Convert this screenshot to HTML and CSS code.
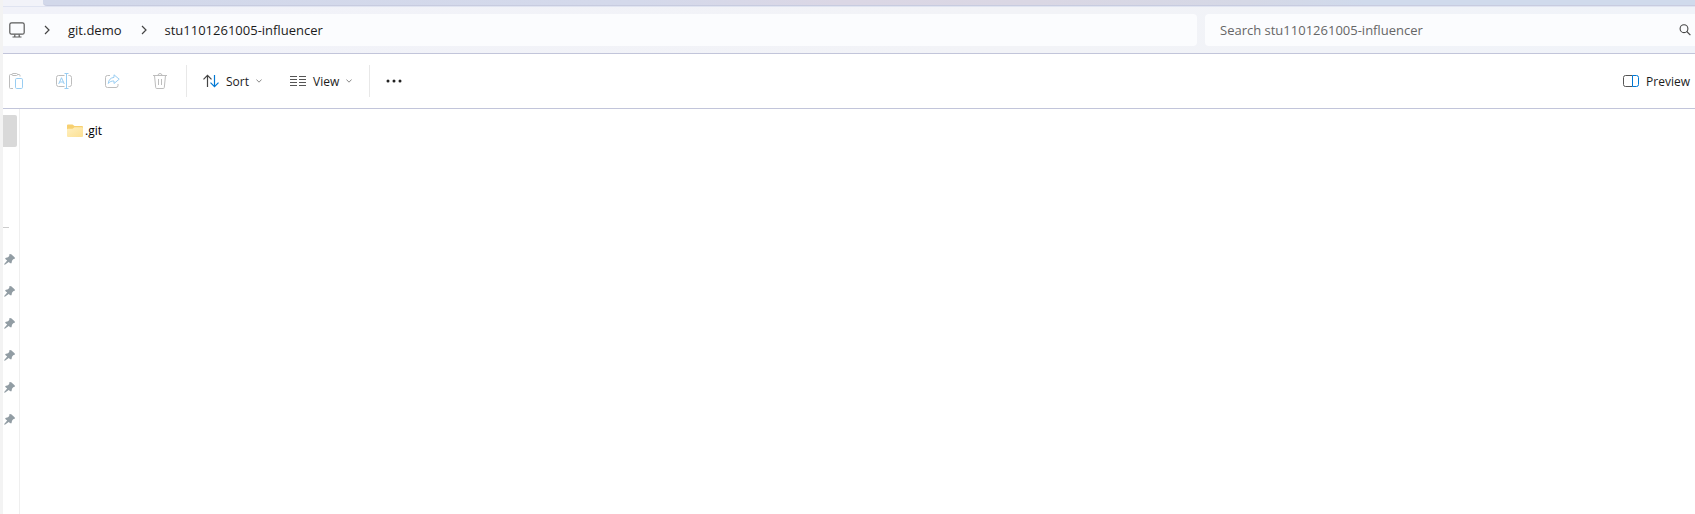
FILE: index.html
```
<!DOCTYPE html>
<html lang="en">
<head>
<meta charset="utf-8">
<title>stu1101261005-influencer</title>
<link rel="stylesheet" href="styles.css">
</head>
<body>
<div class="window">
  <div class="tabs"><div class="tabs-rest"></div></div>
  <header class="location">
    <nav class="address" aria-label="Address">
      <button class="crumb-icon" aria-label="This PC"><svg width="16" height="16" viewBox="0 0 16 16" fill="none" stroke="#5a5a5a" stroke-width="1.2"><rect x=".8" y=".8" width="14.4" height="11.4" rx="1.8"/><path d="M5.8 12.4v2.4M10.2 12.4v2.4M3.5 15h9"/></svg></button>
      <svg class="sep" width="6" height="10" viewBox="0 0 6 10" fill="none" stroke="#444" stroke-width="1.2"><path d="M1 1l4 4-4 4"/></svg>
      <a class="crumb" href="#">git.demo</a>
      <svg class="sep" width="6" height="10" viewBox="0 0 6 10" fill="none" stroke="#444" stroke-width="1.2"><path d="M1 1l4 4-4 4"/></svg>
      <a class="crumb" href="#">stu1101261005-influencer</a>
    </nav>
    <form class="search">
      <input class="search-input" type="text" aria-label="Search" placeholder="Search stu1101261005-influencer">
      <svg width="12" height="12" viewBox="0 0 12 12" fill="none" stroke="#444" stroke-width="1.1"><circle cx="5" cy="4.7" r="3.9"/><path d="M7.8 7.5l3.6 3.7"/></svg>
    </form>
  </header>
  <div class="toolbar">
    <div class="icon-group">
      <button class="tool" aria-label="Paste"><svg width="16" height="16" viewBox="0 0 16 16" fill="none" stroke="#bdbdbd"><path d="M5 15.5H2.500a1 1 0 0 1-1-1v-12a1 1 0 0 1 1-1H4M9.500 1.500H11a1 1 0 0 1 1 1V3.500"/><rect x="4" y=".5" width="5.500" height="2" rx="1"/><rect x="7.500" y="5.500" width="7" height="10" rx="1.200" stroke="#99cdf2"/></svg></button>
      <button class="tool" aria-label="Rename"><svg width="16" height="16" viewBox="0 0 16 16" fill="none" stroke="#bdbdbd"><path d="M8.500 13.500H2.500a2 2 0 0 1-2-2v-7a2 2 0 0 1 2-2h6M12.500 2.500h1a2 2 0 0 1 2 2v7a2 2 0 0 1-2 2h-1"/><g stroke="#99cdf2"><path d="M2.700 11L5.500 4.700 8.300 11M3.600 9h3.800M10.500 .5v15M8.500 .5h4M8.500 15.500h4"/></g></svg></button>
      <button class="tool" aria-label="Share"><svg width="16" height="16" viewBox="0 0 16 16" fill="none" stroke="#bdbdbd"><path d="M6 2.500H3.500a2 2 0 0 0-2 2v8a2 2 0 0 0 2 2h8.500a2 2 0 0 0 2-2V11"/><path d="M10 1.800l5.200 4.400-5.200 4.300V8C7.500 7.900 5.700 8.600 4.300 10.500 4.500 7 6.500 4.700 10 4.400z" stroke="#99cdf2" stroke-linejoin="round"/></svg></button>
      <button class="tool" aria-label="Delete"><svg width="16" height="16" viewBox="0 0 16 16" fill="none" stroke="#bdbdbd"><path d="M1 2.500h14M6 2.500a2 2 0 0 1 4 0M2.500 2.500l1.200 12a1 1 0 0 0 1 1h6.600a1 1 0 0 0 1-1l1.200-12M6.500 6v6M9.500 6v6"/></svg></button>
    </div>
    <div class="menu-group">
      <button class="menu"><svg width="16" height="14" viewBox="0 0 16 14" fill="none" stroke="#444" stroke-width="1.200"><path d="M4.500 13V1.300M.5 5.300l4-4 4 4"/><path d="M11.500 1v11.700M7.500 8.700l4 4 4-4" stroke="#0078d4"/></svg><span>Sort</span><svg width="6" height="4" viewBox="0 0 6 4" fill="none" stroke="#888"><path d="M.4.500L3 3.200 5.600.500"/></svg></button>
      <button class="menu"><svg width="16" height="10" viewBox="0 0 16 10" fill="none" stroke="#555"><path d="M0 .5h7M0 3.500h7M0 6.500h7M0 9.500h7M9 .5h7M9 3.500h7M9 6.500h7M9 9.500h7"/></svg><span>View</span><svg width="6" height="4" viewBox="0 0 6 4" fill="none" stroke="#888"><path d="M.4.500L3 3.200 5.600.500"/></svg></button>
    </div>
    <button class="more" aria-label="See more"><svg width="16" height="4" viewBox="0 0 16 4" fill="#222"><circle cx="2" cy="2" r="1.500"/><circle cx="8" cy="2" r="1.500"/><circle cx="14" cy="2" r="1.500"/></svg></button>
    <button class="menu preview"><svg width="16" height="12" viewBox="0 0 16 12" fill="none" stroke="#555"><path d="M9.500.5H2.500a2 2 0 0 0-2 2v7a2 2 0 0 0 2 2h7"/><path d="M9.500.5h4a2 2 0 0 1 2 2v7a2 2 0 0 1-2 2h-4z" stroke="#0078d4"/></svg><span>Preview</span></button>
  </div>
  <div class="main">
    <aside class="sidebar">
      <div class="thumb"></div>
      <div class="rule"></div>
      <div class="pins">
        <svg class="pin" viewBox="0 0 11 11"><path d="M5.500 0L7.200.2 10.800 3.400V4.700L9.200 5.200 8 6.800 7.500 9.300H6.300L4.700 7.900.9 10.800 0 10.200 3.200 6.500 1.300 5V3.900L4 3.200 5.200 2z"/></svg>
        <svg class="pin" viewBox="0 0 11 11"><path d="M5.500 0L7.200.2 10.800 3.400V4.700L9.200 5.200 8 6.800 7.500 9.300H6.300L4.700 7.900.9 10.800 0 10.200 3.200 6.500 1.300 5V3.900L4 3.200 5.200 2z"/></svg>
        <svg class="pin" viewBox="0 0 11 11"><path d="M5.500 0L7.200.2 10.800 3.400V4.700L9.200 5.200 8 6.800 7.500 9.300H6.300L4.700 7.900.9 10.800 0 10.200 3.200 6.500 1.300 5V3.900L4 3.200 5.200 2z"/></svg>
        <svg class="pin" viewBox="0 0 11 11"><path d="M5.500 0L7.200.2 10.800 3.400V4.700L9.200 5.200 8 6.800 7.500 9.300H6.300L4.700 7.900.9 10.800 0 10.200 3.200 6.500 1.300 5V3.900L4 3.200 5.200 2z"/></svg>
        <svg class="pin" viewBox="0 0 11 11"><path d="M5.500 0L7.200.2 10.800 3.400V4.700L9.200 5.200 8 6.800 7.500 9.300H6.300L4.700 7.900.9 10.800 0 10.200 3.200 6.500 1.300 5V3.900L4 3.200 5.200 2z"/></svg>
        <svg class="pin" viewBox="0 0 11 11"><path d="M5.500 0L7.200.2 10.800 3.400V4.700L9.200 5.200 8 6.800 7.500 9.300H6.300L4.700 7.900.9 10.800 0 10.200 3.200 6.500 1.300 5V3.900L4 3.200 5.200 2z"/></svg>
      </div>
    </aside>
    <main class="files">
      <div class="file"><svg width="16" height="14" viewBox="0 0 16 14"><defs><linearGradient id="f" x1="0" y1="0" x2="1" y2="1"><stop offset="0" stop-color="#fff0c0"/><stop offset="1" stop-color="#fce093"/></linearGradient></defs><path d="M0 1.500Q0 .5 1 .5h4.500L7.500 2H15q1 0 1 1v5H0z" fill="#f7d070"/><path d="M0 5.500q0-.8 1-.8h4.500L7.500 3.300H15q1 0 1 1V12q0 1-1 1H1q-1 0-1-1z" fill="url(#f)"/></svg><span>.git</span></div>
    </main>
  </div>
</div>
</body>
</html>
```
FILE: styles.css
```
* { box-sizing: border-box; }
body {
  margin: 0;
  background: #f3f3f3;
  font: 12px/16px "Open Sans", "Noto Sans", sans-serif;
  color: #1b1b1b;
}
svg { display: block; flex: none; }
button { border: 0; padding: 0; background: none; font: inherit; color: inherit; }
.window {
  margin-left: 3px;
  min-height: 100vh;
  display: flex;
  flex-direction: column;
  background: #fff;
}
.tabs {
  height: 7px;
  padding-left: 40px;
  background: #f2f3f9;
  border-bottom: 1px solid #e0e4f1;
}
.tabs-rest {
  height: 6px;
  border-bottom: 1px solid #c8cce0;
  border-bottom-left-radius: 4px;
  background: linear-gradient(90deg, #d2d8ea 0%, #d4d9eb 36%, #dbd7e5 48%, #dad7e4 60%, #d5d8e6 73%, #d0daec 80%, #d0daec 100%);
}
.location {
  display: flex;
  gap: 8px;
  padding: 7px 0;
  background: linear-gradient(90deg, #f1f2f9, #f2f3f7 60%, #f0f3f9);
  border-bottom: 1px solid #c2c5da;
}
.address, .search {
  display: flex;
  align-items: center;
  height: 32px;
  background: #fbfcfe;
  border-radius: 4px;
  font-size: 13px;
}
.address { flex: 1; padding-left: 6px; border-radius: 0 4px 4px 0; }
.sep { margin: 0 18px 0 19px; }
.crumb { color: inherit; text-decoration: none; }
.search { flex: 0 0 490px; padding: 0 4px 0 15px; border-radius: 4px 0 0 4px; }
.search-input {
  flex: 1;
  min-width: 0;
  border: 0;
  padding: 0;
  outline: 0;
  background: none;
  font: inherit;
}
.search-input::placeholder { color: #666; opacity: 1; }
.toolbar {
  display: flex;
  align-items: center;
  height: 55px;
  padding: 0 5px;
  border-bottom: 1px solid #c2c5da;
}
.icon-group, .menu-group {
  display: flex;
  align-items: center;
  height: 32px;
  border-right: 1px solid #e8e8e8;
}
.icon-group { gap: 32px; padding-right: 18px; }
.menu-group { gap: 28px; padding: 0 17px 0 16px; }
.menu { display: flex; align-items: center; gap: 7px; }
.menu span { padding-top: 2px; }
.more { margin-left: 16px; }
.preview { margin-left: auto; }
.main { flex: 1; display: flex; }
.sidebar { width: 17px; border-right: 1px solid #efefef; padding-top: 6px; }
.thumb { width: 14px; height: 32px; background: #d9d9d9; border-radius: 0 2px 2px 0; }
.rule { width: 6px; height: 1px; margin-top: 80px; background: #ccc; }
.pins { display: flex; flex-direction: column; gap: 21px; padding: 26px 0 0 1px; }
.pin { width: 11px; height: 11px; fill: #929da4; }
.files { flex: 1; padding: 14px 0 0 47px; }
.file { display: flex; align-items: center; gap: 2px; color: #000; }
```
